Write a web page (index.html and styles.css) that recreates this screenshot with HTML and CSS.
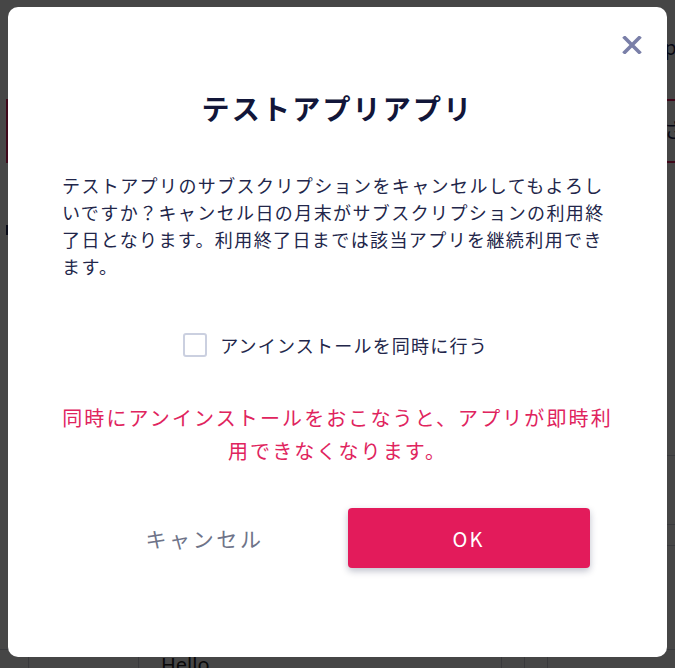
FILE: index.html
```html
<!DOCTYPE html>
<html lang="ja">
<head>
<meta charset="utf-8">
<title>サブスクリプションのキャンセル</title>
<link rel="stylesheet" href="styles.css">
</head>
<body>
<div class="page">
  <div class="bg-top"><span class="bg-top-text">Apps</span></div>
  <div class="bg-tab"><span class="bg-tab-text">さようなら</span></div>
  <div class="bg-gap"><span class="bg-mark"></span></div>
  <div class="bg-rows">
    <div class="bg-row r1"></div>
    <div class="bg-row r2"></div>
    <div class="bg-row r3"></div>
  </div>
  <div class="bg-table">
    <div class="cell c1"></div>
    <div class="cell c2"></div>
    <div class="cell c3"><span class="hello">Hello</span></div>
    <div class="cell c4"></div>
    <div class="cell c5"></div>
    <div class="cell c6"></div>
  </div>
</div>

<div class="overlay">
  <div class="modal" role="dialog">
    <button class="close" aria-label="閉じる">
      <svg width="20" height="18" viewBox="0 0 20 18"><path d="M1.5 0.5 L18.5 17.5 M18.5 0.5 L1.5 17.5" stroke="#7a7fa8" stroke-width="3.6" fill="none"/></svg>
    </button>
    <h1 class="title">テストアプリアプリ</h1>
    <p class="message">テストアプリのサブスクリプションをキャンセルしてもよろしいですか？キャンセル日の月末がサブスクリプションの利用終了日となります。利用終了日までは該当アプリを継続利用できます。</p>
    <label class="check">
      <span class="box"></span>
      <span class="check-label">アンインストールを同時に行う</span>
    </label>
    <p class="warning">同時にアンインストールをおこなうと、アプリが即時利用できなくなります。</p>
    <div class="actions">
      <button class="btn btn-cancel">キャンセル</button>
      <button class="btn btn-ok">OK</button>
    </div>
  </div>
</div>
</body>
</html>
```

FILE: styles.css
```css
* { box-sizing: border-box; }
html, body { margin: 0; padding: 0; }
body {
  width: 675px;
  height: 668px;
  overflow: hidden;
  background: #ffffff;
  font-family: "Noto Sans CJK JP", "Noto Sans", sans-serif;
  color: #1f2346;
}

/* background page (dimmed by the overlay) */
.page {
  display: flex;
  flex-direction: column;
  height: 668px;
  overflow: hidden;
}
.page > * { flex-shrink: 0; }
.bg-top {
  height: 99px;
  padding-left: 652px;
  padding-top: 32px;
  font-size: 20px;
  color: #1c2150;
  white-space: nowrap;
  overflow: hidden;
}
.bg-tab {
  height: 64px;
  margin-left: 6px;
  width: 760px;
  border: 2px solid #e31b5b;
  padding-left: 656px;
  padding-top: 14px;
  font-size: 20px;
  white-space: nowrap;
  color: #1c2150;
  overflow: hidden;
}
.bg-gap {
  height: 66px;
  padding-top: 62px;
}
.bg-mark {
  display: block;
  width: 3px;
  height: 10px;
  margin-left: 6px;
  background: #1c2150;
}
.bg-rows {
  display: flex;
  flex-direction: column;
  margin-left: 520px;
  margin-top: 226px;
}
.bg-row { border-bottom: 1px solid #d0d2dc; }
.r1 { height: 1px; }
.r2 { height: 69px; }
.r3 { height: 21px; }
.bg-table {
  display: flex;
  margin-top: 103px;
  border-top: 1px solid #d0d2dc;
}
.cell { border-right: 1px solid #cfd1da; height: 40px; }
.c1 { width: 29px; }
.c2 { width: 110px; }
.c3 { width: 363px; padding-left: 22px; padding-top: 3px; }
.c4 { width: 23px; }
.c5 { width: 23px; }
.c6 { flex: 1; border-right: none; }
.hello { font-family: "Noto Sans", sans-serif; font-size: 20px; color: #222; line-height: 20px; }

/* overlay + modal */
.overlay {
  position: fixed;
  inset: 0;
  background: rgba(0, 0, 0, 0.725);
  display: flex;
  justify-content: center;
  align-items: flex-start;
  padding-top: 7px;
}
.modal {
  position: relative;
  width: 659px;
  height: 650px;
  background: #fff;
  border-radius: 10px;
  padding: 81px 54px 0;
  display: flex;
  flex-direction: column;
  align-items: center;
}
.close {
  position: absolute;
  top: 29px;
  right: 25px;
  width: 20px;
  height: 18px;
  padding: 0;
  border: none;
  background: none;
  display: flex;
}
.title {
  margin: 0;
  font-size: 28px;
  line-height: 40px;
  font-weight: 700;
  letter-spacing: 2.2px;
  color: #121639;
}
.message {
  margin: 44px 0 0;
  width: 551px;
  font-size: 18px;
  line-height: 27px;
  letter-spacing: 1.4px;
  color: #22264a;
}
.check {
  margin-top: 53px;
  display: flex;
  align-items: center;
  gap: 13px;
  height: 24px;
  margin-left: -4px;
}
.box {
  width: 24px;
  height: 24px;
  border: 2px solid #cbd0e0;
  border-radius: 3px;
  background: #fff;
}
.check-label {
  font-size: 18px;
  line-height: 24px;
  letter-spacing: 1.2px;
  color: #22264a;
}
.warning {
  margin: 44px 0 0;
  width: 557px;
  text-align: center;
  font-size: 20px;
  line-height: 33px;
  letter-spacing: 2.1px;
  color: #e0245e;
}
.actions {
  margin-top: 41px;
  display: flex;
  gap: 22px;
  margin-left: -2px;
}
.btn {
  width: 242px;
  height: 60px;
  border: none;
  border-radius: 4px;
  font-family: "Noto Sans CJK JP", "Noto Sans", sans-serif;
  cursor: pointer;
}
.btn-cancel {
  background: #fff;
  color: #6e7388;
  font-size: 21px;
  letter-spacing: 2.6px;
}
.btn-ok {
  background: #e31b5b;
  color: #fff;
  font-size: 20px;
  letter-spacing: 2px;
  box-shadow: 0 3px 7px rgba(20, 30, 70, 0.28);
}
```
